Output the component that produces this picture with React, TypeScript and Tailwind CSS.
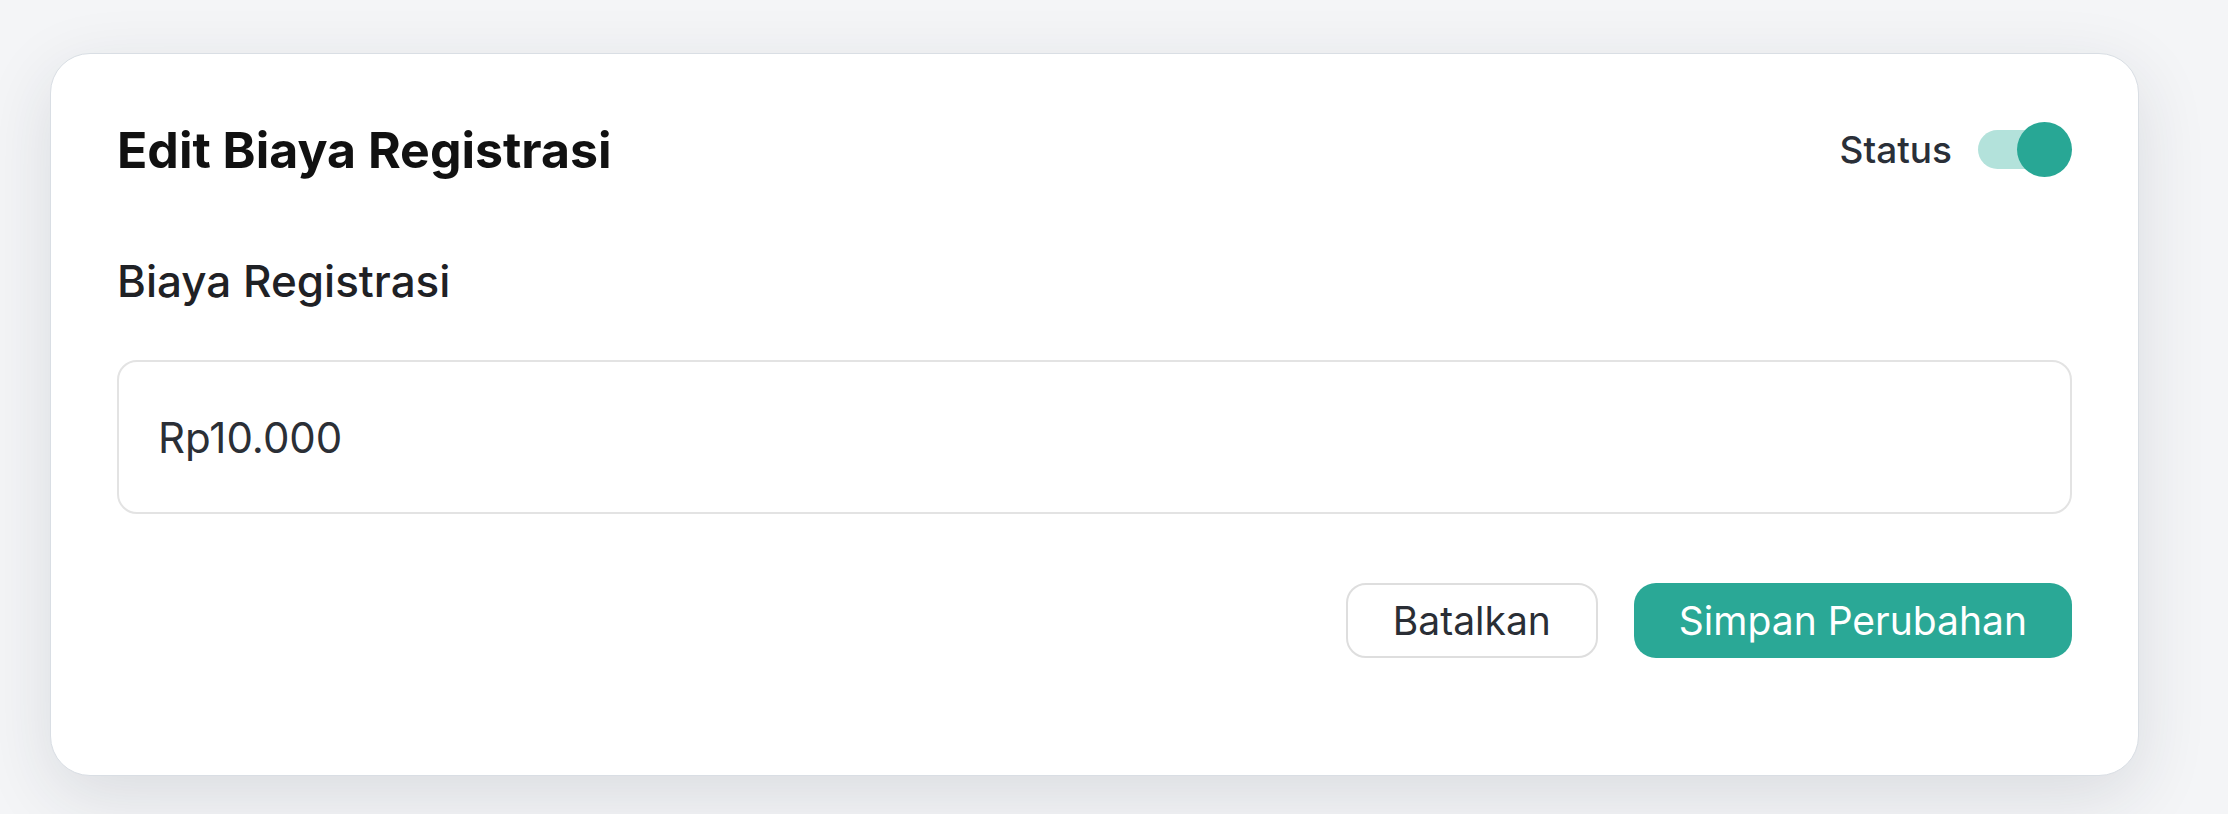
import { useState } from "react";

const inter = { fontFamily: "Inter, 'Liberation Sans', sans-serif" };

function StatusToggle({ on, onToggle }: { on: boolean; onToggle: () => void }) {
  return (
    <button
      type="button"
      onClick={onToggle}
      aria-pressed={on}
      className="relative h-[55px] w-[94px] shrink-0"
    >
      <span
        className={
          on
            ? "absolute left-0 top-[8px] h-[39px] w-[84px] rounded-full bg-[#b3e2db]"
            : "absolute left-0 top-[8px] h-[39px] w-[84px] rounded-full bg-[#d9dde2]"
        }
      />
      <span
        className={
          on
            ? "absolute right-0 top-0 h-[55px] w-[55px] rounded-full bg-[#28a795]"
            : "absolute left-0 top-0 h-[55px] w-[55px] rounded-full bg-white shadow"
        }
      />
    </button>
  );
}

export default function App() {
  const [active, setActive] = useState(true);
  const [fee, setFee] = useState("Rp10.000");

  return (
    <div
      className="min-h-[814px] w-full bg-[#f4f5f7] pl-[50px] pt-[53px] pb-[39px]"
      style={inter}
    >
      <div className="w-[2089px] rounded-[40px] border border-[#d9dee4] bg-white px-[66px] pt-[68px] pb-[117px] shadow-[0_20px_70px_rgba(30,40,60,0.12)]">
        {/* header */}
        <div className="flex h-[55px] items-center justify-between">
          <h1 className="text-[50px] font-bold leading-none text-[#111111]">
            Edit Biaya Registrasi
          </h1>
          <div className="flex items-center gap-[26px]">
            <span className="text-[37px] font-medium leading-none text-[#2a2f38]">
              Status
            </span>
            <StatusToggle on={active} onToggle={() => setActive(!active)} />
          </div>
        </div>

        {/* field */}
        <label className="mt-[82px] block text-[44px] font-medium leading-none text-[#1f2125]">
          Biaya Registrasi
        </label>
        <input
          value={fee}
          onChange={(e) => setFee(e.target.value)}
          className="mt-[57px] block h-[154px] w-full rounded-[20px] border-2 border-[#e3e3e3] bg-white px-[39px] text-[42px] leading-none text-[#2b2f36] outline-none"
        />

        {/* actions */}
        <div className="mt-[69px] flex justify-end gap-[36px]">
          <button
            type="button"
            className="h-[75px] rounded-[20px] border-2 border-[#dedede] bg-white px-[45px] text-[39px] leading-none text-[#2a2e35]"
          >
            Batalkan
          </button>
          <button
            type="button"
            className="h-[75px] rounded-[22px] bg-[#2aa896] px-[45px] text-[39px] leading-none text-white"
          >
            Simpan Perubahan
          </button>
        </div>
      </div>
    </div>
  );
}
